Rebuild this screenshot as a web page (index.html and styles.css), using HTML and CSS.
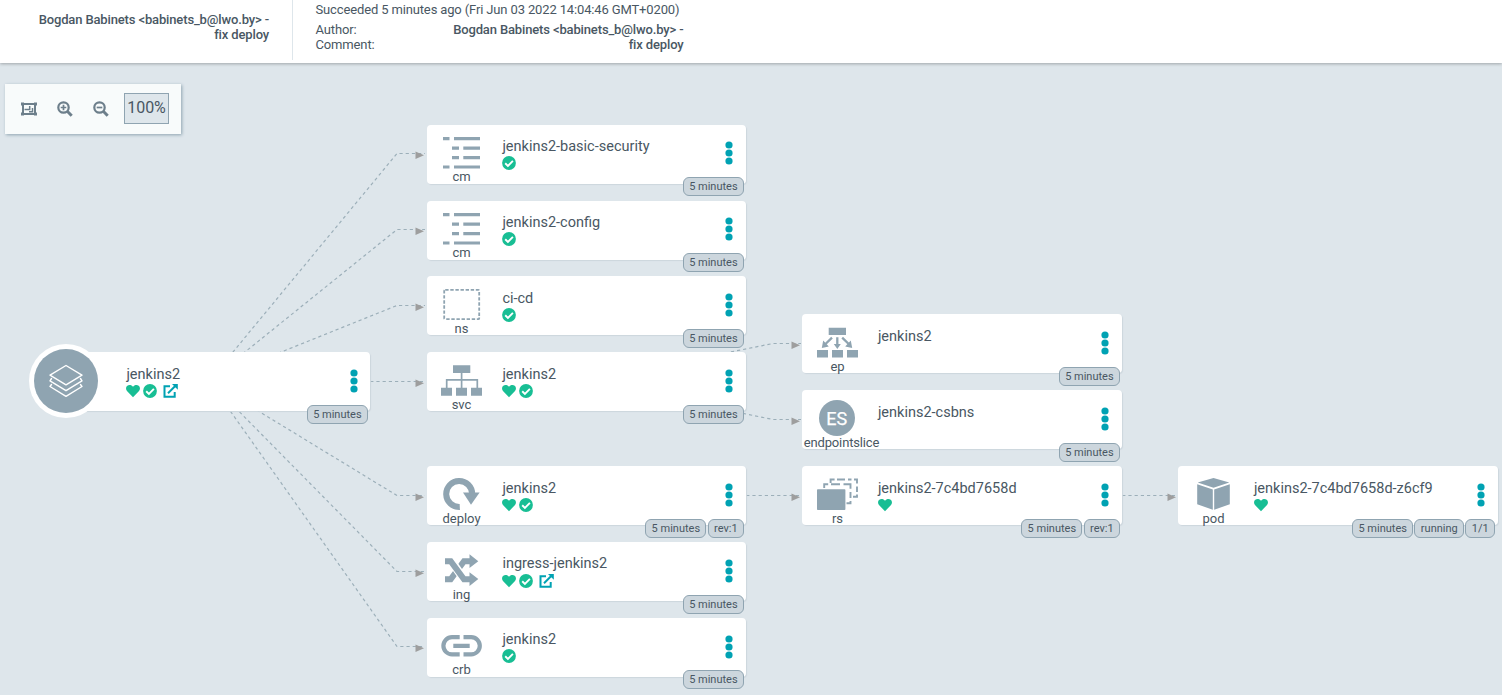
FILE: index.html
```
<!DOCTYPE html>
<html lang="en">
<head>
<meta charset="utf-8">
<title>jenkins2</title>
<link rel="stylesheet" href="styles.css">
</head>
<body>
<svg class="defs" width="0" height="0">
  <symbol id="cm" viewBox="0 0 70 46"><path d="M16 12h6.5v3.2H16zM27 12h26v3.2H27zM25 21.6h7v3.2h-7zM36.3 21.6H53v3.2H36.3zM25 31h7v3.2h-7zM36.3 31H53v3.2H36.3zM16 40.4h6.5v3.2H16zM27 40.4h26v3.2H27z"/></symbol>
  <symbol id="ns" viewBox="0 0 70 46"><rect x="17.2" y="13.8" width="35" height="29.4" rx="1" fill="none" stroke="#8fa4b1" stroke-width="1.8" stroke-dasharray="3.4 1.7"/></symbol>
  <symbol id="svc" viewBox="0 0 70 46"><path d="M26 13.3h17.3V21H26zM14 35.7h11v8H14zM29 35.7h11v8H29zM44 35.7h11v8H44z"/><path d="M34.6 21v15M19.7 36v-8.2h30.6V36" fill="none" stroke="#8fa4b1" stroke-width="1.7"/></symbol>
  <symbol id="deploy" viewBox="0 0 70 46"><path d="M32.8 41A13 13 0 1 1 45.2 28" fill="none" stroke="#8fa4b1" stroke-width="6"/><path d="M36 26.5h16.6L44 38.8z"/></symbol>
  <symbol id="ing" viewBox="0 0 70 46"><g fill="none" stroke="#8fa4b1" stroke-width="6"><path d="M18 37.2h5.7L37 19.2h6"/><path d="M24.5 19.500l12 17" stroke="#fff" stroke-width="8.500"/><path d="M18 19.2h5.7L37 37.2h6"/></g><path d="M42.5 12.3l8.8 6.9-8.8 6.9zM42.5 30.2l8.8 6.9-8.8 6.9z"/></symbol>
  <symbol id="crb" viewBox="0 0 70 46"><path d="M32.7 19.2H25a8.6 8.6 0 0 0 0 17.2h7.7M36.5 19.2h7.7a8.6 8.6 0 0 1 0 17.2h-7.7M26.3 27.8h16.4" fill="none" stroke="#8fa4b1" stroke-width="4.2"/></symbol>
  <symbol id="ep" viewBox="0 0 70 46"><path d="M26.7 13.7H44V21H26.7zM15 36h11v7.4H15zM30 36h11v7.4H30zM45 36h11v7.4H45zM31.800 30h7l-3.500 5zM19.800 34l1.400-7.600 5.600 6zM50.200 34l-1.400-7.600-5.600 6z"/><path d="M35.3 23.3V31M30 23.600l-6.500 6.4M40.2 23.600l6.5 6.4" fill="none" stroke="#8fa4b1" stroke-width="2.300"/></symbol>
  <symbol id="rs" viewBox="0 0 70 46"><rect x="15" y="23.3" width="28.4" height="20.8" rx=".8"/><path d="M22.2 22v-3.700h4M29 18.300h9M41.500 18.300h7v4.500M48.500 26v6M48.500 35v2.300h-4M28.600 17v-3.500h4M35 13.500h8M46 13.500h3.500M52 13.500h3v4M55 20.500v5.500M55 28.500v2.300h-4" fill="none" stroke="#8fa4b1" stroke-width="1.900"/></symbol>
  <symbol id="pod" viewBox="0 0 70 46"><path d="M35.5 12l15.8 4.6-15.8 5.1-15.8-5.1zM19.2 18.2l15.6 5.2v20.4l-15.6-5.5zM51.8 18.2l-15.6 5.2v20.4l15.6-5.5z"/></symbol>
  <symbol id="heart" viewBox="0 0 14 14"><path fill="#18be94" d="M7 13.2L1.2 7.3C-.4 5.600-.3 3 1.300 1.700 3 .4 5.200.9 6.500 2.200l.5.6.5-.6C8.800.9 11 .4 12.700 1.700 14.300 3 14.400 5.600 12.800 7.300z"/></symbol>
  <symbol id="check" viewBox="0 0 14 14"><circle cx="7" cy="7" r="6.900" fill="#18be94"/><path d="M3.200 7.300l2.700 2.600 5-5" fill="none" stroke="#fff" stroke-width="1.900"/></symbol>
  <symbol id="ext" viewBox="0 0 15 14"><path d="M7 2.200H1.500v10.500h10.200V8" fill="none" stroke="#00a2b3" stroke-width="2"/><path d="M5 9.200L12.500 1.700" fill="none" stroke="#00a2b3" stroke-width="2"/><path d="M9 0h5.800v5.800z" fill="#00a2b3"/></symbol>
  <symbol id="dots" viewBox="0 0 8 24"><g fill="#00a2b3"><circle cx="4" cy="4" r="3.600"/><circle cx="4" cy="12" r="3.600"/><circle cx="4" cy="20" r="3.600"/></g></symbol>
</svg>

<header class="summary">
  <div class="commit"><b>Bogdan Babinets &lt;babinets_b@lwo.by&gt; -<br>fix deploy</b></div>
  <div class="result">
    <div>Succeeded 5 minutes ago (Fri Jun 03 2022 14:04:46 GMT+0200)</div>
    <div class="meta"><div>Author:<br>Comment:</div><b>Bogdan Babinets &lt;babinets_b@lwo.by&gt; -<br>fix deploy</b></div>
  </div>
</header>

<main class="canvas">
  <svg class="edges" width="1502" height="695">
    <g class="lines">
      <path d="M209 381L397 153.500H425"/><path d="M209 381L397 229.500H425"/><path d="M209 381L397 305.500H425"/><path d="M209 381.500H425"/>
      <path d="M209 381L397 495.500H425"/><path d="M209 381L397 571.500H425"/><path d="M209 381L397 646.500H425"/>
      <path d="M585 381L773 343.500H801"/><path d="M585 381L773 419.500H801"/><path d="M585 495.500H801"/><path d="M961 495.500H1177"/>
    </g>
    <path class="arrows" d="M415.500 151.500l8.500 3.700-8.500 3.700zM415.500 227.500l8.500 3.700-8.500 3.700zM415.500 303.500l8.500 3.700-8.500 3.700zM415.500 379.500l8.500 3.700-8.500 3.700zM415.500 493.500l8.500 3.700-8.500 3.700zM415.500 569.500l8.500 3.700-8.500 3.700zM415.500 644.500l8.500 3.700-8.500 3.700zM791.500 341.500l8.500 3.700-8.500 3.700zM791.500 417.500l8.500 3.700-8.500 3.700zM791.500 493.500l8.500 3.700-8.500 3.700zM1167.500 493.500l8.500 3.700-8.500 3.700z"/>
  </svg>

  <div class="toolbar">
    <svg width="16" height="14" viewBox="0 0 16 14"><path d="M2 2h12v10H2z" fill="none" stroke="#6d7f8b" stroke-width="2"/><path d="M0 .5h3v3H0zM13 .5h3v3h-3zM0 10.500h3v3H0zM13 10.500h3v3h-3z" fill="#6d7f8b"/><path d="M3.500 7.500h5.200V4M11.500 6v3.800H8" fill="none" stroke="#6d7f8b" stroke-width="1.500"/></svg>
    <svg width="16" height="16" viewBox="0 0 16 16" fill="none" stroke="#6d7f8b"><circle cx="6.500" cy="6.500" r="5.200" stroke-width="2.200"/><path d="M10.300 10.300l4.400 4.400" stroke-width="3"/><path d="M3.700 6.500h5.600M6.500 3.700v5.600" stroke-width="1.700"/></svg>
    <svg width="16" height="16" viewBox="0 0 16 16" fill="none" stroke="#6d7f8b"><circle cx="6.500" cy="6.500" r="5.200" stroke-width="2.200"/><path d="M10.300 10.300l4.400 4.400" stroke-width="3"/><path d="M3.700 6.500h5.600" stroke-width="1.700"/></svg>
    <div class="zoom">100%</div>
  </div>

  <div class="node root">
    <svg class="app" width="74" height="74" viewBox="0 0 74 74"><circle cx="37" cy="37" r="37" fill="#fff"/><circle cx="37" cy="37" r="32" fill="#8fa4b1"/><g fill="none" stroke="#fff" stroke-width="1.400" stroke-linejoin="round" stroke-linecap="round"><path d="M37 21.500l16 9.700-16 9.700-16-9.700z"/><path d="M22.500 34.500L21 36.800l16 9.900 16-9.900-1.500-2.300M22.500 40.500L21 42.500l16 9.900 16-9.900-1.500-2"/></g></svg>
    <div class="info"><div class="name">jenkins2</div><div class="status"><svg><use href="#heart"/></svg><svg><use href="#check"/></svg><svg class="ext"><use href="#ext"/></svg></div></div>
    <svg class="dots"><use href="#dots"/></svg><div class="tags"><span>5 minutes</span></div>
  </div>

  <div class="node c1 r1"><div class="kind"><svg><use href="#cm"/></svg><span>cm</span></div><div class="info"><div class="name">jenkins2-basic-security</div><div class="status"><svg><use href="#check"/></svg></div></div><svg class="dots"><use href="#dots"/></svg><div class="tags"><span>5 minutes</span></div></div>
  <div class="node c1 r2"><div class="kind"><svg><use href="#cm"/></svg><span>cm</span></div><div class="info"><div class="name">jenkins2-config</div><div class="status"><svg><use href="#check"/></svg></div></div><svg class="dots"><use href="#dots"/></svg><div class="tags"><span>5 minutes</span></div></div>
  <div class="node c1 r3"><div class="kind"><svg><use href="#ns"/></svg><span>ns</span></div><div class="info"><div class="name">ci-cd</div><div class="status"><svg><use href="#check"/></svg></div></div><svg class="dots"><use href="#dots"/></svg><div class="tags"><span>5 minutes</span></div></div>
  <div class="node c1 r4"><div class="kind"><svg><use href="#svc"/></svg><span>svc</span></div><div class="info"><div class="name">jenkins2</div><div class="status"><svg><use href="#heart"/></svg><svg><use href="#check"/></svg></div></div><svg class="dots"><use href="#dots"/></svg><div class="tags"><span>5 minutes</span></div></div>
  <div class="node c1 r5"><div class="kind"><svg><use href="#deploy"/></svg><span>deploy</span></div><div class="info"><div class="name">jenkins2</div><div class="status"><svg><use href="#heart"/></svg><svg><use href="#check"/></svg></div></div><svg class="dots"><use href="#dots"/></svg><div class="tags"><span>5 minutes</span><span>rev:1</span></div></div>
  <div class="node c1 r6"><div class="kind"><svg><use href="#ing"/></svg><span>ing</span></div><div class="info"><div class="name">ingress-jenkins2</div><div class="status"><svg><use href="#heart"/></svg><svg><use href="#check"/></svg><svg class="ext"><use href="#ext"/></svg></div></div><svg class="dots"><use href="#dots"/></svg><div class="tags"><span>5 minutes</span></div></div>
  <div class="node c1 r7"><div class="kind"><svg><use href="#crb"/></svg><span>crb</span></div><div class="info"><div class="name">jenkins2</div><div class="status"><svg><use href="#check"/></svg></div></div><svg class="dots"><use href="#dots"/></svg><div class="tags"><span>5 minutes</span></div></div>

  <div class="node c2 ra"><div class="kind"><svg><use href="#ep"/></svg><span>ep</span></div><div class="info"><div class="name">jenkins2</div></div><svg class="dots"><use href="#dots"/></svg><div class="tags"><span>5 minutes</span></div></div>
  <div class="node c2 rb"><div class="kind"><div class="letters">ES</div><span>endpointslice</span></div><div class="info"><div class="name">jenkins2-csbns</div></div><svg class="dots"><use href="#dots"/></svg><div class="tags"><span>5 minutes</span></div></div>
  <div class="node c2 r5"><div class="kind"><svg><use href="#rs"/></svg><span>rs</span></div><div class="info"><div class="name">jenkins2-7c4bd7658d</div><div class="status"><svg><use href="#heart"/></svg></div></div><svg class="dots"><use href="#dots"/></svg><div class="tags"><span>5 minutes</span><span>rev:1</span></div></div>
  <div class="node c3 r5"><div class="kind"><svg><use href="#pod"/></svg><span>pod</span></div><div class="info"><div class="name">jenkins2-7c4bd7658d-z6cf9</div><div class="status"><svg><use href="#heart"/></svg></div></div><svg class="dots"><use href="#dots"/></svg><div class="tags"><span>5 minutes</span><span>running</span><span>1/1</span></div></div>
</main>
</body>
</html>
```
FILE: styles.css
```
* { box-sizing: border-box; }
body { margin: 0; width: 1502px; height: 695px; overflow: hidden; position: relative; background: #dee6eb; color: #495763; font-family: Roboto, "Liberation Sans", sans-serif; }
svg { display: block; flex: none; }
.defs { position: absolute; }
b { font-weight: 500; }
.summary { position: relative; z-index: 1; display: flex; height: 63px; background: #fff; box-shadow: 0 1px 3px rgba(0, 0, 0, .28); font-size: 13px; line-height: 15px; letter-spacing: -.14px; }
.commit { width: 293px; height: 60px; padding: 12px 23px 0 0; border-right: 1px solid #dee6eb; text-align: right; }
.result { width: 390.500px; padding: 2px 0 0 22.500px; white-space: nowrap; }
.meta { display: flex; justify-content: space-between; margin-top: 5px; }
.meta b { text-align: right; }
.canvas { position: absolute; inset: 0; }
.edges { position: absolute; inset: 0; }
.lines { fill: none; stroke: #9cafb9; stroke-width: 1.200; stroke-dasharray: 3.200 3; }
.arrows { fill: #9e9e9e; }
.toolbar { position: absolute; left: 5px; top: 84px; width: 176px; height: 50px; display: flex; align-items: center; gap: 20px; padding: 0 12px 1px 16px; background: #f8fbfb; box-shadow: 1px 1px 3px #8fa4b1; }
.zoom { width: 45px; height: 31px; margin-left: -5px; border: 1px solid #8fa4b1; background: #dee6eb; font-size: 16px; line-height: 28px; text-align: center; }
.node { position: absolute; width: 319px; height: 59px; display: flex; border-radius: 4px; background: #fff; box-shadow: 1px 1px 1px #ccd6dd; }
.root { left: 62px; top: 352px; width: 308px; padding-left: 64px; }
.app { position: absolute; left: -33px; top: -8px; }
.c1 { left: 427px; }
.c2 { left: 802px; width: 320px; padding-left: .5px; }
.c3 { left: 1178px; width: 320px; padding-left: .5px; }
.r1 { top: 125px; }
.r2 { top: 201px; }
.r3 { top: 276px; }
.r4 { top: 352px; }
.r5 { top: 466px; }
.r6 { top: 542px; }
.r7 { top: 618px; }
.ra { top: 314px; }
.rb { top: 390px; }
.kind { width: 70px; margin-right: 5px; display: flex; flex-direction: column; align-items: center; font-size: 13px; line-height: 14px; white-space: nowrap; }
.kind > svg { width: 70px; height: 46px; fill: #8fa4b1; }
.c1 .kind > span { margin-right: 1px; }
.c2 .kind > svg, .c3 .kind > svg { margin-left: -1.500px; }
.rb .kind > span { margin-left: 8px; letter-spacing: -.15px; }
.letters { width: 36px; height: 36px; margin: 10px 1.500px 0 0; border-radius: 50%; background: #8fa4b1; color: #fff; font-size: 18px; line-height: 38px; text-align: center; -webkit-text-stroke: .25px #fff; }
.info { flex: 1; padding: 14px 0 0 .4px; }
.name { height: 18px; font-size: 14.500px; line-height: 18px; white-space: nowrap; }
.status { display: flex; gap: 3px; }
.status svg { width: 14px; height: 14px; }
.status .ext { width: 15px; margin-left: 3px; }
.dots { width: 8px; height: 24px; margin: 17px 12.600px 0 0; }
.root .dots { margin-right: 12px; }
.tags { position: absolute; right: 2px; bottom: -13px; display: flex; gap: 1.200px; }
.c3 .tags { right: 3px; }
.tags span { height: 19px; padding: 0 5.400px; border: 1px solid #8fa4b1; border-radius: 6px; background: #ccd6dd; font-size: 11px; line-height: 17px; white-space: nowrap; }
.r1 .info, .r2 .info, .r6 .info, .r7 .info { padding-top: 13px; }
.r6 .status { margin-top: 1px; }
.r1 .kind > span, .r2 .kind > span, .r7 .kind > span { margin-top: -1px; }
.r1 .dots, .r2 .dots { margin-top: 16px; }
.r1 .tags, .r2 .tags, .r7 .tags { bottom: -12px; }
```
